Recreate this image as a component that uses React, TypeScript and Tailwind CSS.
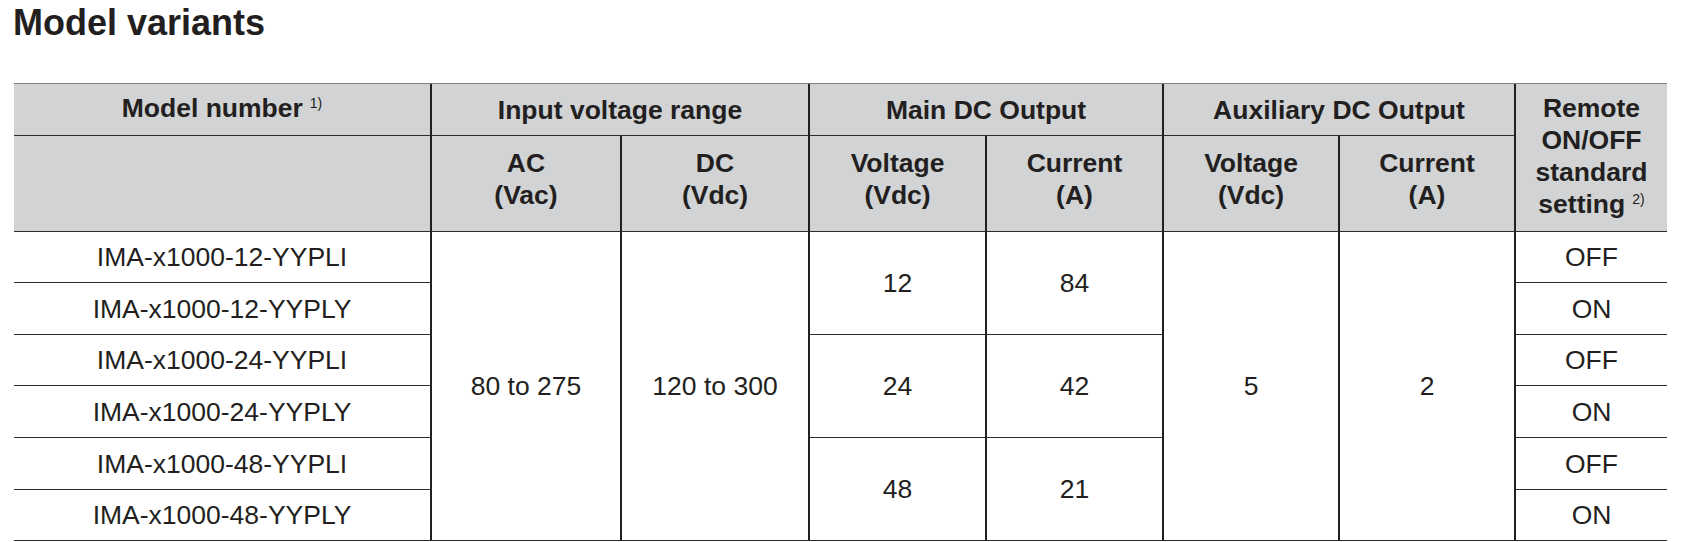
// Model variants table

const head = "flex items-center justify-center text-center bg-[#d1d3d4] font-bold border-b border-b-[#2d2d2d]";
const data = "flex items-center justify-center text-center border-b border-b-[#2d2d2d]";
const vr = "border-r-2 border-r-[#231f20]";

const models = [
  { name: "IMA-x1000-12-YYPLI", remote: "OFF" },
  { name: "IMA-x1000-12-YYPLY", remote: "ON" },
  { name: "IMA-x1000-24-YYPLI", remote: "OFF" },
  { name: "IMA-x1000-24-YYPLY", remote: "ON" },
  { name: "IMA-x1000-48-YYPLI", remote: "OFF" },
  { name: "IMA-x1000-48-YYPLY", remote: "ON" },
];

function Note({ children }: { children: React.ReactNode }) {
  return <span className="relative -top-[9px] ml-[7px] text-[14px] font-normal">{children}</span>;
}

export default function App() {
  return (
    <div className="bg-white min-h-[542px] px-[14px] text-[#231f20] font-['Liberation_Sans',Arial,sans-serif]">
      <h2 className="pt-[3px] -ml-[1px] text-[36px] leading-[40px] font-bold">Model variants</h2>

      <div className="mt-[40px] w-[1653px] border-t border-t-[#808080] grid grid-cols-[418px_190px_188px_177px_177px_176px_176px_151px] grid-rows-[52px_96px_51px_52px_51px_52px_52px_51px] text-[26.5px] leading-[32px]">
        {/* header row 1 */}
        <div className={`${head} ${vr}`}>
          <span>
            Model number<Note>1)</Note>
          </span>
        </div>
        <div className={`${head} ${vr} col-span-2`}>Input voltage range</div>
        <div className={`${head} ${vr} col-span-2`}>Main DC Output</div>
        <div className={`${head} ${vr} col-span-2`}>Auxiliary DC Output</div>
        <div className={`${head} row-span-2`}>
          <span>
            Remote
            <br />
            ON/OFF
            <br />
            standard
            <br />
            setting<Note>2)</Note>
          </span>
        </div>

        {/* header row 2 */}
        <div className={`${head} ${vr}`} />
        <div className={`${head} ${vr} pb-[10px]`}>
          AC
          <br />
          (Vac)
        </div>
        <div className={`${head} ${vr} pb-[10px]`}>
          DC
          <br />
          (Vdc)
        </div>
        <div className={`${head} ${vr} pb-[10px]`}>
          Voltage
          <br />
          (Vdc)
        </div>
        <div className={`${head} ${vr} pb-[10px]`}>
          Current
          <br />
          (A)
        </div>
        <div className={`${head} ${vr} pb-[10px]`}>
          Voltage
          <br />
          (Vdc)
        </div>
        <div className={`${head} ${vr} pb-[10px]`}>
          Current
          <br />
          (A)
        </div>

        {/* body */}
        {models.map((m, i) => (
          <div key={m.name} className="contents">
            <div className={`${data} ${vr}`}>{m.name}</div>
            {i === 0 && (
              <>
                <div className={`${data} ${vr} row-span-6`}>80 to 275</div>
                <div className={`${data} ${vr} row-span-6`}>120 to 300</div>
              </>
            )}
            {i % 2 === 0 && (
              <>
                <div className={`${data} ${vr} row-span-2`}>{["12", "24", "48"][i / 2]}</div>
                <div className={`${data} ${vr} row-span-2`}>{["84", "42", "21"][i / 2]}</div>
              </>
            )}
            {i === 0 && (
              <>
                <div className={`${data} ${vr} row-span-6`}>5</div>
                <div className={`${data} ${vr} row-span-6`}>2</div>
              </>
            )}
            <div className={data}>{m.remote}</div>
          </div>
        ))}
      </div>
    </div>
  );
}
